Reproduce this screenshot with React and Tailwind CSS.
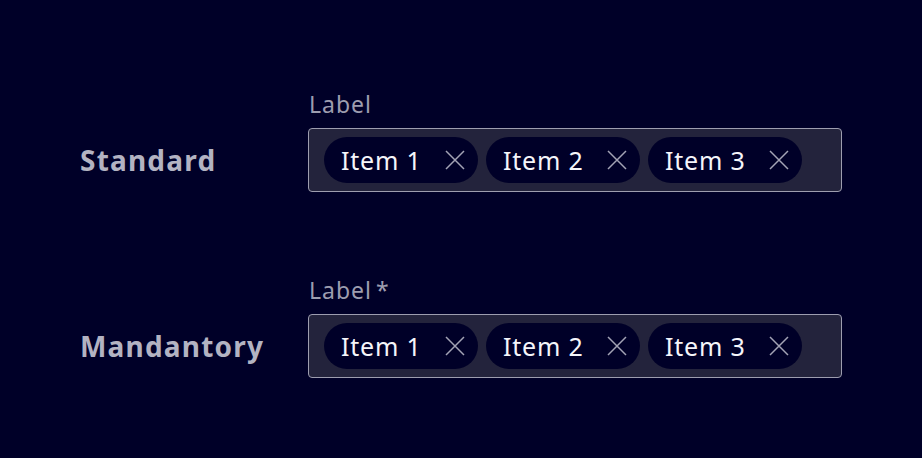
import React from 'react';

const items = ['Item 1', 'Item 2', 'Item 3'];

const CloseIcon = () => (
  <svg width="20" height="20" viewBox="0 0 20 20" className="shrink-0">
    <path d="M1 1 L19 19 M19 1 L1 19" stroke="#a3a3b5" strokeWidth="1.5" fill="none" />
  </svg>
);

const Chip = ({ text }) => (
  <div className="flex items-center justify-between w-[154px] h-[46px] rounded-full bg-[#000028] pl-[17px] pr-[13px]">
    <span className="text-[25px] tracking-[0.8px] text-[#f5f5fa] leading-none">{text}</span>
    <CloseIcon />
  </div>
);

const Field = ({ title, label, required }) => (
  <div className="flex items-end">
    <div className="w-[308px] h-[64px] flex items-center pl-[80px]">
      <span className="text-[28px] tracking-[1.2px] font-bold text-[#b3b3c2] whitespace-nowrap">{title}</span>
    </div>
    <div className="flex flex-col">
      <span className="text-[23px] tracking-[1px] text-[#9d9daf] leading-[22px] mb-[13px] pl-[1px]">
        {label}
        {required && <span className="ml-[4px]">*</span>}
      </span>
      <div className="w-[534px] h-[64px] border border-[#9d9daf] rounded-[4px] bg-[#23233c] flex items-center gap-[8px] pl-[15px]">
        {items.map(i => <Chip key={i} text={i} />)}
      </div>
    </div>
  </div>
);

export default function App() {
  return (
    <div className="w-[922px] h-[458px] bg-[#000028] pt-[93px] flex flex-col gap-[87px]" style={{ fontFamily: '"Noto Sans", sans-serif' }}>
      <Field title="Standard" label="Label" />
      <Field title="Mandantory" label="Label" required />
    </div>
  );
}
